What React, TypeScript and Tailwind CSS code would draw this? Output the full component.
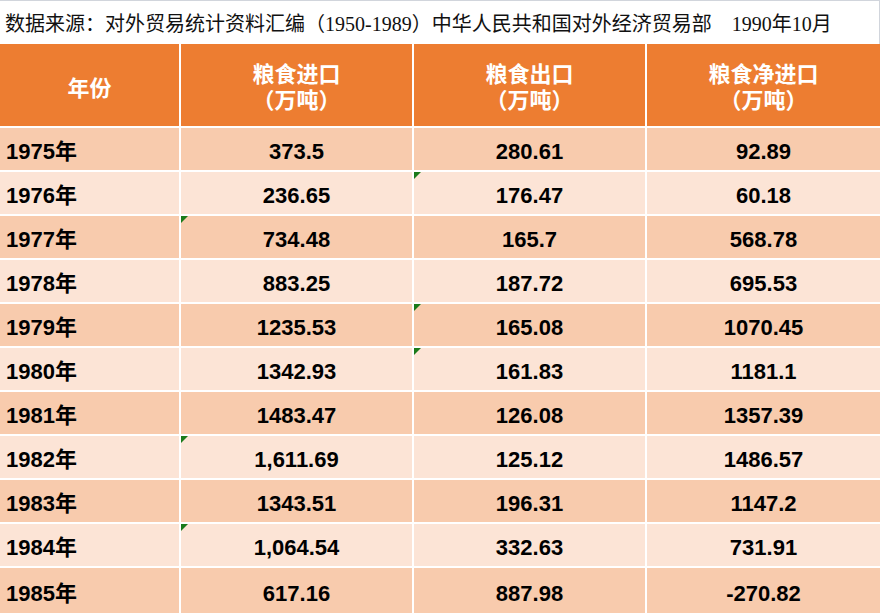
import React from 'react';

const rows: [string, string, string, string][] = [
  ['1975年', '373.5', '280.61', '92.89'],
  ['1976年', '236.65', '176.47', '60.18'],
  ['1977年', '734.48', '165.7', '568.78'],
  ['1978年', '883.25', '187.72', '695.53'],
  ['1979年', '1235.53', '165.08', '1070.45'],
  ['1980年', '1342.93', '161.83', '1181.1'],
  ['1981年', '1483.47', '126.08', '1357.39'],
  ['1982年', '1,611.69', '125.12', '1486.57'],
  ['1983年', '1343.51', '196.31', '1147.2'],
  ['1984年', '1,064.54', '332.63', '731.91'],
  ['1985年', '617.16', '887.98', '-270.82'],
];

// 带绿色小三角的单元格 (行号-列号)
const flagged = new Set(['1-2', '4-2', '5-2', '2-1', '7-1', '9-1']);

const Flag = () => (
  <svg className="absolute left-0 top-0" width="7" height="7" viewBox="0 0 7 7">
    <polygon points="0,0 7,0 0,7" fill="#1a7a1a" />
  </svg>
);

const App: React.FC = () => {
  return (
    <div className="w-[880px] h-[613px] overflow-hidden bg-white font-['Liberation_Sans','Noto_Sans_CJK_SC',sans-serif]">
      {/* 标题 */}
      <div className="h-[44px] flex items-center pl-[5px] pt-[2px] border-t border-r border-gray-300 text-[20px] text-[#111] font-['Liberation_Serif','Noto_Sans_CJK_SC',serif] whitespace-nowrap">
        数据来源：对外贸易统计资料汇编（1950-1989）中华人民共和国对外经济贸易部　1990年10月
      </div>

      {/* 表格 */}
      <div className="grid grid-cols-[179px_231px_231px_233px] gap-[2px] bg-white">
        <div className="h-[82px] bg-[#ED7D31] text-white font-bold text-[22px] flex items-center justify-center pt-[6px]">年份</div>
        {['粮食进口', '粮食出口', '粮食净进口'].map((t) => (
          <div key={t} className="h-[82px] bg-[#ED7D31] text-white font-bold text-[22px] leading-[26px] flex flex-col items-center justify-center pt-[6px]">
            <span>{t}</span>
            <span>（万吨）</span>
          </div>
        ))}

        {rows.map((r, i) => {
          const bg = i % 2 === 0 ? 'bg-[#F8CBAD]' : 'bg-[#FCE4D6]';
          const h = i === rows.length - 1 ? 'h-[46px]' : 'h-[42px]';
          return (
            <React.Fragment key={r[0]}>
              <div className={`${bg} ${h} relative flex items-center pl-[6px] pt-[4px] font-bold text-[22px] text-black`}>{r[0]}</div>
              {r.slice(1).map((v, j) => (
                <div key={j} className={`${bg} ${h} relative flex items-center justify-center pt-[4px] font-bold text-[22px] text-black`}>
                  {flagged.has(`${i}-${j + 1}`) && <Flag />}
                  {v}
                </div>
              ))}
            </React.Fragment>
          );
        })}
      </div>
    </div>
  );
};

export default App;
